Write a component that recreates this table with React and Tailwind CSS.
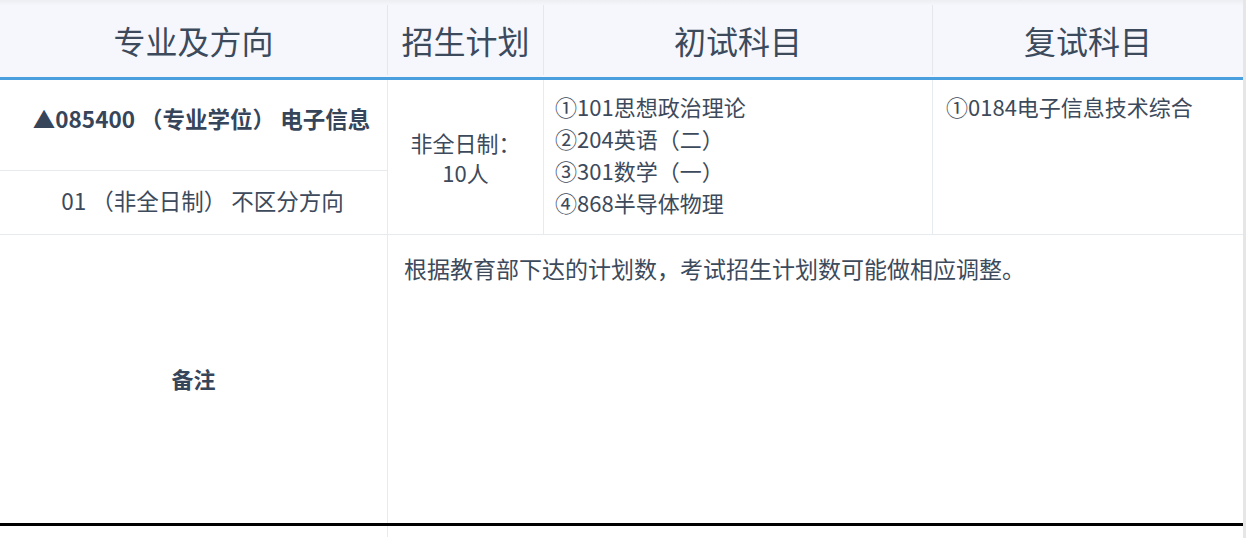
export default function App() {
  const font = { fontFamily: '"Noto Sans CJK SC", "Noto Sans", sans-serif' };
  return (
    <div className="flex w-[1246px] h-[538px] bg-white text-[#3d4a5b]" style={font}>
      <div className="w-[1243px] flex flex-col">
        <div className="h-[5px] bg-gradient-to-b from-[#eceef2] to-[#f4f6fb]" />
        <div className="h-[72px] flex bg-[#f5f7fc] text-[32px] text-[#3c4a5c] pb-[2px]">
          <div className="w-[388px] border-r border-[#e4e8ee] flex items-center justify-center">专业及方向</div>
          <div className="w-[156px] border-r border-[#e4e8ee] flex items-center justify-center">招生计划</div>
          <div className="w-[389px] border-r border-[#e4e8ee] flex items-center justify-center">初试科目</div>
          <div className="flex-1 flex items-center justify-center">复试科目</div>
        </div>
        <div className="h-[3px] bg-[#4aa0de]" />
        <div className="h-[155px] flex border-b border-[#e6ebf0] text-[22px]">
          <div className="w-[388px] border-r border-[#e6ebf0] flex flex-col text-[22.5px]">
            <div className="h-[91px] border-b border-[#e6ebf0] flex items-center justify-center font-bold text-[#36455a] pb-[12px] pl-[16px]">
              ▲085400 （专业学位） 电子信息
            </div>
            <div className="flex-1 flex items-center justify-center pb-[4px] pl-[18px]">01 （非全日制） 不区分方向</div>
          </div>
          <div className="w-[156px] border-r border-[#e6ebf0] flex items-center justify-center text-center leading-[30px]">
            <div>
              非全日制：
              <br />
              10人
            </div>
          </div>
          <div className="w-[389px] border-r border-[#e6ebf0] pl-[11px] pt-[10px] leading-[32px]">
            <div>①101思想政治理论</div>
            <div>②204英语（二）</div>
            <div>③301数学（一）</div>
            <div>④868半导体物理</div>
          </div>
          <div className="flex-1 pl-[13px] pt-[10px] leading-[32px]">①0184电子信息技术综合</div>
        </div>
        <div className="h-[288px] flex text-[22px]">
          <div className="w-[388px] border-r border-[#e6ebf0] flex items-center justify-center font-bold text-[#36455a] pb-[2px]">
            备注
          </div>
          <div className="flex-1 pl-[16px] pt-[17px] leading-[32px] text-[23px]">
            根据教育部下达的计划数，考试招生计划数可能做相应调整。
          </div>
        </div>
        <div className="h-[3px] bg-black" />
        <div className="flex-1 flex">
          <div className="w-[388px] border-r border-[#e6ebf0] mb-[1px]" />
        </div>
      </div>
      <div className="w-[3px] bg-[#e6e6e6]" />
    </div>
  );
}
